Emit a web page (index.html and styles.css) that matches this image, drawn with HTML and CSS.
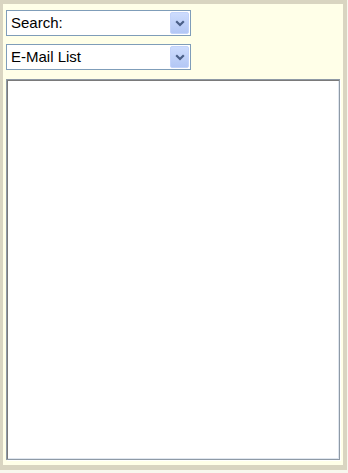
FILE: index.html
```html
<!DOCTYPE html>
<html>
<head>
<meta charset="utf-8">
<link rel="stylesheet" href="styles.css">
</head>
<body>
<div class="frame">
  <div class="combo">
    <span class="combo-text">Search:</span>
    <span class="combo-btn"><svg width="10" height="7" viewBox="0 0 10 7"><path d="M1.2 1.2 L5 5 L8.8 1.2" fill="none" stroke="#4a5f87" stroke-width="2.2"/></svg></span>
  </div>
  <div class="combo">
    <span class="combo-text">E-Mail List</span>
    <span class="combo-btn"><svg width="10" height="7" viewBox="0 0 10 7"><path d="M1.2 1.2 L5 5 L8.8 1.2" fill="none" stroke="#4a5f87" stroke-width="2.2"/></svg></span>
  </div>
  <div class="listbox"></div>
</div>
</body>
</html>
```
FILE: styles.css
```css
html, body {
  margin: 0;
  padding: 0;
}
body {
  background: #f8f7ee;
  width: 348px;
  height: 473px;
  font-family: "Liberation Sans", Arial, sans-serif;
}
.frame {
  box-sizing: border-box;
  width: 347px;
  height: 470px;
  background: #ffffe8;
  border-style: solid;
  border-color: #d9d5c1;
  border-width: 4px 4px 5px 3px;
  padding: 6px 3px 5px 3px;
  display: flex;
  flex-direction: column;
}
.combo {
  box-sizing: border-box;
  width: 185px;
  height: 26px;
  background: #fff;
  border: 1px solid #7f9db9;
  display: flex;
  align-items: center;
  justify-content: space-between;
  padding: 1px;
  margin-bottom: 8px;
}
.combo-text {
  font-size: 15px;
  color: #000;
  padding-left: 3px;
  line-height: 18px;
}
.combo-btn {
  box-sizing: border-box;
  width: 19px;
  height: 22px;
  background: linear-gradient(#cddcfd, #b3c7f5);
  border: 1px solid #c3d3fa;
  border-radius: 2px;
  display: flex;
  align-items: center;
  justify-content: center;
}
.listbox {
  box-sizing: border-box;
  width: 334px;
  flex: 1;
  margin-top: 1px;
  background: #fff;
  border: 1px solid #8f9aa6;
  box-shadow: inset 1px 1px 0 #7a7a7a, inset -1px -1px 0 #dfe6ef, 1px 1px 0 #ffffff;
}
```
